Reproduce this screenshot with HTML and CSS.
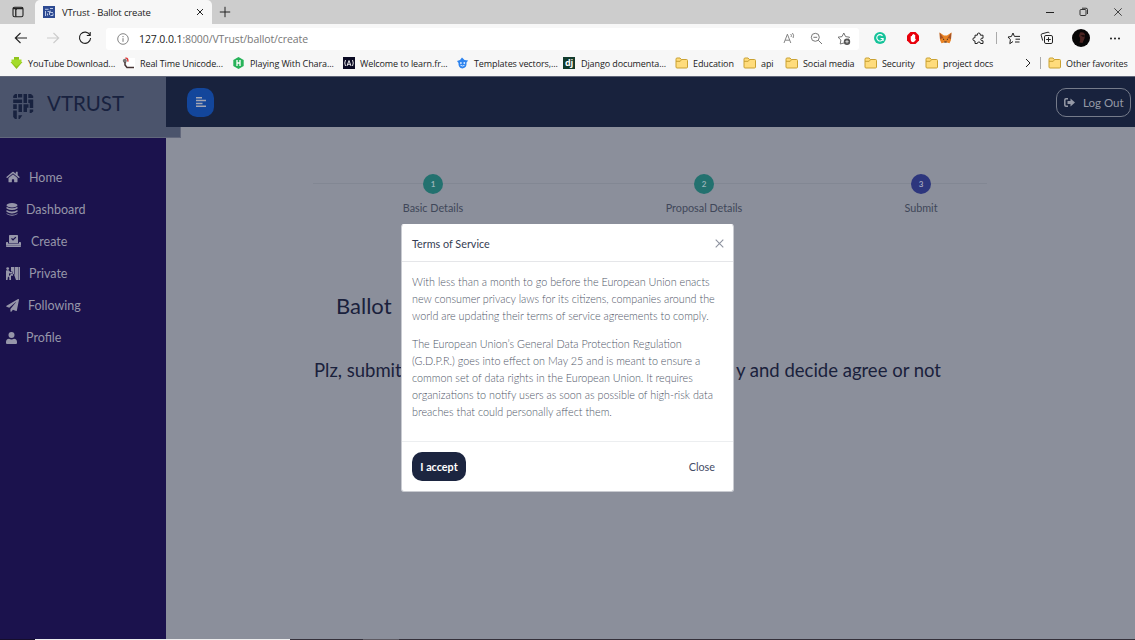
FILE: index.html
```html
<!DOCTYPE html>
<html lang="en">
<head>
<meta charset="utf-8">
<title>VTrust - Ballot create</title>
<link rel="stylesheet" href="styles.css">
</head>
<body>
<svg class="defs" width="0" height="0">
  <symbol id="folder" viewBox="0 0 13 12"><path d="M1 2.2Q1 1 2 1h3l1.3 1.5H11.5q1 0 1 1V10q0 1-1 1H2q-1 0-1-1z" fill="#ffdc7c" stroke="#c9a132"/><path d="M1 4.3h4.2l1.3-1.6" fill="none" stroke="#c9a132"/></symbol>
</svg>
<header class="browser">
  <div class="tabs">
    <div class="tab-menu"><svg width="12" height="12" viewBox="0 0 12 12"><rect x="1" y="1.2" width="10" height="9.6" rx="1.6" fill="none" stroke="#222" stroke-width="1.1"/><path d="M1 2.5h10M4 3v7.5" stroke="#222" stroke-width="1.7"/><path d="M4.5 4v6" stroke="#ccc" stroke-width=".5"/></svg></div>
    <div class="tab">
      <svg width="12" height="12" viewBox="0 0 12 12"><rect width="12" height="12" fill="#2d4a92"/><path d="M2 3.3h3.5M2.5 5v5M4.5 5.5h2V9M7 2.5h3M7.2 4.5v2H10M10 7.5v2H7.5M4.5 7.5v2" stroke="#b9c6e4" fill="none"/></svg>
      <span class="tab-title">VTrust - Ballot create</span>
      <svg class="tab-close" width="8" height="8" viewBox="0 0 8 8"><path d="M1 1l6 6M7 1L1 7" stroke="#222"/></svg>
    </div>
    <svg class="tab-new" width="12" height="12" viewBox="0 0 12 12"><path d="M6 .8v10.4M.8 6h10.4" stroke="#222"/></svg>
    <div class="window-controls">
      <svg width="10" height="10" viewBox="0 0 10 10"><path d="M1 5.5h8" stroke="#222"/></svg>
      <svg width="10" height="10" viewBox="0 0 10 10"><rect x="1" y="2.5" width="6" height="6" rx="1" fill="none" stroke="#222" stroke-width=".9"/><path d="M3 1.2h4q1.5 0 1.5 1.5V7" fill="none" stroke="#222" stroke-width=".9"/></svg>
      <svg width="10" height="10" viewBox="0 0 10 10"><path d="M1.3 1.3l7.4 7.4M8.7 1.3L1.3 8.7" stroke="#333" stroke-width=".9"/></svg>
    </div>
  </div>
  <div class="toolbar">
    <div class="nav">
      <svg width="14" height="12" viewBox="0 0 14 12"><path d="M13 6H1.3M6.5 1L1.3 6l5.2 5" fill="none" stroke="#222" stroke-width="1.1"/></svg>
      <svg width="14" height="12" viewBox="0 0 14 12"><path d="M1 6h11.7M7.5 1l5.2 5-5.2 5" fill="none" stroke="#ccc" stroke-width="1.1"/></svg>
      <svg width="14" height="14" viewBox="0 0 14 14"><path d="M11.9 4A5.6 5.6 0 1 0 12.6 7M12.2 1v3.5H8.8" fill="none" stroke="#222" stroke-width="1.1"/></svg>
    </div>
    <div class="address">
      <svg width="12" height="12" viewBox="0 0 12 12"><circle cx="6" cy="6" r="5.3" fill="none" stroke="#777" stroke-width=".9"/><path d="M6 5.2v3.6M6 3v1.2" stroke="#777"/></svg>
      <span class="url"><b>127.0.0.1</b>:8000/VTrust/ballot/create</span>
      <div class="address-tools">
        <svg width="13" height="13" viewBox="0 0 13 13"><path d="M1 11l3.4-8.8L7.8 11M2.2 8.2h4.4M7.7 2q1.2 1.2.4 3M9.4 1q2 2 .7 5" fill="none" stroke="#777" stroke-width=".9"/></svg>
        <svg width="13" height="13" viewBox="0 0 13 13"><circle cx="5.3" cy="5.3" r="4" fill="none" stroke="#777"/><path d="M3.4 5.3h3.8M8.3 8.3L12 12" stroke="#777"/></svg>
        <svg width="14" height="13" viewBox="0 0 14 13"><path d="M7 11L3.2 12l.7-4L1 5.2l4-.6L6.8 1l1.8 3.6 4 .6-1 1.2" fill="none" stroke="#666" stroke-width=".9"/><circle cx="10" cy="9.7" r="3.2" fill="#555"/><path d="M10 8v3.4M8.3 9.7h3.4" stroke="#fff" stroke-width=".7"/></svg>
      </div>
    </div>
    <div class="extensions">
      <svg width="12" height="12" viewBox="0 0 12 12"><circle cx="6" cy="6" r="6" fill="#15c39a"/><path d="M8.5 3.8A3.2 3.2 0 1 0 9.1 6.5H6.6M9.1 6.5v2.4" fill="none" stroke="#fff" stroke-width="1.1"/></svg>
      <svg width="12" height="12" viewBox="0 0 12 12"><path d="M3.5 0h5L12 3.5v5L8.5 12h-5L0 8.5v-5z" fill="#e8000b"/><path d="M3.7 4.2v3q0 3 2.5 3 1.7 0 3-3.2l-1 .2V3H7.3V2H6.2v.8H5v1.2z" fill="#fff"/></svg>
      <svg width="13" height="12" viewBox="0 0 13 12"><path d="M.6.6L5 3.5h3L12.4.6 12 8l-1.5 3.2-2.7-.8H5.2l-2.7.8L1 8z" fill="#e98324"/><path d="M.6.6L4.5 6 1 7zM12.4.6L8.5 6 12 7z" fill="#a65325"/><path d="M4 7l1.2.7M9 7l-1.2.7M5.3 10h2.4" stroke="#332b2b"/></svg>
      <svg width="13" height="13" viewBox="0 0 13 13"><path d="M3 3.2h2.3Q5 1 6.8 1T8.4 3.2H11v3Q8.8 5.7 8.8 7.4T11 8.8V11.5H8.5Q8.4 9.8 6.8 10T5.3 11.5H3V9Q.9 9 .9 7.2T3 5.7z" fill="none" stroke="#222"/></svg>
      <i class="divider"></i>
      <svg width="14" height="13" viewBox="0 0 14 13"><path d="M6 9.5L2.8 11.7l.6-4L1 5l3.4-.5L6 1l1.4 3.4H13M8.5 7.2H13M8 10h4.5" fill="none" stroke="#222"/></svg>
      <svg width="14" height="14" viewBox="0 0 14 14"><rect x="4.5" y="4.5" width="8" height="8" rx="1.4" fill="none" stroke="#222"/><path d="M8.5 6.2v4.6M6.2 8.5h4.6M2.7 9.6L1.2 4.2q-.3-1.1.8-1.4l6-1.6q1-.2 1.3 1" fill="none" stroke="#222"/></svg>
      <svg width="18" height="18" viewBox="0 0 18 18"><circle cx="9" cy="9" r="9" fill="#080607"/><path d="M8 3.5q4-1 5 2l-.5 4-2 4.5-3-.5Q9 9 7 7z" fill="#4b2422"/><path d="M8.5 6h4l.5 1.5-2 .5z" fill="#1b0d0d"/></svg>
      <svg width="10" height="3" viewBox="0 0 10 3"><circle cx="1" cy="1.5" r=".9"/><circle cx="5" cy="1.5" r=".9"/><circle cx="9" cy="1.5" r=".9"/></svg>
    </div>
  </div>
  <nav class="favorites">
    <a class="fav-download"><svg width="13" height="12" viewBox="0 0 13 12"><path d="M4 0h5v5h3.5L6.5 12 .5 5H4z" fill="#8fc31b"/><path d="M1.5 2.5h10v3L6.5 9.5l-5-4z" fill="#a4dc2b"/></svg>YouTube Download...</a>
    <a class="fav-unicode"><svg width="13" height="12" viewBox="0 0 13 12"><path d="M5 1h8v11H5z" fill="#fff"/><circle cx="2.8" cy="3.8" r="2" fill="#777"/><path d="M3.4 1.2q3-.6 2.4 3.5" fill="none" stroke="#d33" stroke-width="1.4"/><path d="M3 5v3l2 2.4h7" fill="none" stroke="#433" stroke-width="1.5"/></svg>Real Time Unicode...</a>
    <a class="fav-playing"><svg width="13" height="12" viewBox="0 0 13 12"><path d="M6.5 0l5.2 3v6l-5.2 3-5.2-3V3z" fill="#28b35a"/><path d="M5 3v6M8 3v6M5 6h3" stroke="#fff" stroke-width="1.3"/></svg>Playing With Chara...</a>
    <a class="fav-learn"><svg width="13" height="12" viewBox="0 0 13 12"><path d="M1 0h12v12H1z" fill="#0a0a23"/><path d="M3.5 3q-1.5 3 0 6M10.5 3q1.5 3 0 6M5 9l2-5.5L9 9M5.7 7.3h2.6" fill="none" stroke="#fff" stroke-width=".9"/></svg>Welcome to learn.fr...</a>
    <a class="fav-templates"><svg width="13" height="12" viewBox="0 0 13 12"><path d="M1 4l3-1 2-2.5L8.5 3l3.7.6-1.7 2Q11 11 6.5 11.4 2 11 2.5 6z" fill="#2d83ee"/><circle cx="4.9" cy="6" r=".9" fill="#d9eaff"/><circle cx="8.3" cy="6" r=".9" fill="#d9eaff"/><path d="M4.5 8.3q2 1.4 4 0" fill="none" stroke="#d9eaff"/></svg>Templates vectors,...</a>
    <a class="fav-django"><span class="django">dj</span>Django documenta...</a>
    <a class="fav-education"><svg width="13" height="12"><use href="#folder"/></svg>Education</a>
    <a class="fav-api"><svg width="13" height="12"><use href="#folder"/></svg>api</a>
    <a class="fav-social"><svg width="13" height="12"><use href="#folder"/></svg>Social media</a>
    <a class="fav-security"><svg width="13" height="12"><use href="#folder"/></svg>Security</a>
    <a class="fav-docs"><svg width="13" height="12"><use href="#folder"/></svg>project docs</a>
    <svg class="more" width="6" height="10" viewBox="0 0 6 10"><path d="M1 1l4 4-4 4" fill="none" stroke="#222"/></svg>
    <i class="divider"></i>
    <a class="fav-other"><svg width="13" height="12"><use href="#folder"/></svg>Other favorites</a>
  </nav>
</header>

<div class="app">
  <aside class="sidebar">
    <div class="brand">
      <svg width="21" height="25" viewBox="0 0 21 25" fill="#18223f"><path d="M.2 4V2L2 0h2v4zM5 0h4.2v3.5H5zM10.5 0H14v9h-3.5zM15.3 0H18l2.2 2v2h-4.9zM.2 5.5h8.9V9H.2zM15.3 5.5h4.9V14h-3.5V9h-1.4zM.2 10.3h3.6V15H.2zM5.5 10.3H9V18H5.5zM10.5 10.3h5v3.5h-1.5V18h-3.5zM.2 16.4h3.6V25H2L.2 23zM16.7 15.4h3.5v2l-2 1.7h-1.5zM5.5 21.2h3.8L6.7 25H5.5z"/></svg>
      <span>VTRUST</span>
    </div>
    <nav class="menu">
      <a><svg width="14" height="12" viewBox="0 0 576 512"><path d="M280 148L96 300v164q0 16 16 16l112-1q16 0 16-16v-95q0-16 16-16h64q16 0 16 16v95q0 16 16 16h112q16 0 16-16V300L296 148q-8-6-16 0zM572 251l-84-69V44q0-12-12-12h-56q-12 0-12 12v72l-90-74q-30-24-60 0L4 251q-8 8-1 17l25 31q8 8 17 1l235-193q8-6 16 0l235 193q9 7 17-1l25-31q7-9-1-17z"/></svg>Home</a>
      <a class="item-dashboard"><svg width="12" height="13" viewBox="0 0 12 13"><ellipse cx="6" cy="2.2" rx="5.5" ry="2.2"/><path d="M.5 3.8q5.5 3 11 0v1.7q-5.5 3.2-11 0zM.5 7q5.5 3 11 0v1.8q-5.5 3.2-11 0zM.5 10.2q5.5 3 11 0v.8q-5.5 3.6-11 0z"/></svg>Dashboard</a>
      <a class="item-create"><svg width="15" height="12" viewBox="0 0 15 12"><path fill-rule="evenodd" d="M3 .8Q3 0 3.8 0h7.4q.8 0 .8.8V8H3zM5 3.8l2 2 3.3-3.3-.9-.8L7 4l-1-1z"/><path d="M.8 7H2v1.6h11V7h1.2q.8 0 .8.8v2.4H0V7.8Q0 7 .8 7zM0 10.6h15v.6q0 .8-.8.8H.8q-.8 0-.8-.8z"/></svg>Create</a>
      <a class="item-private"><svg width="14" height="13" viewBox="0 0 14 13"><circle cx="1.7" cy="1.6" r="1.4"/><path d="M0 4q0-.7.7-.7h2L4.2 5H6v1.5H3.5L3 6v2l1.6 2v3H3.3v-2.5L2 9.5 1.5 13H0zM5 0h3v7l-3 .8V7h1.5V4.5H5zM8.6 0h3.8v13H10l-1.8-5 .4-1zM12.8 0H14v13h-1.2zM4 7.5h3v1.3H5V13H4z"/></svg>Private</a>
      <a class="item-following"><svg width="13" height="13" viewBox="0 0 512 512"><path d="M476 3L21 266q-28 18 3 38l104 43L387 121q8-5 4 4L174 390v88q2 40 37 22l62-76 123 51q26 8 32-19L512 32Q508-8 476 3z"/></svg>Following</a>
      <a class="item-profile"><svg width="11" height="12" viewBox="0 0 11 12"><circle cx="5.5" cy="3" r="3"/><path d="M3 6.8q2.5 1.2 5 0 3 .2 3 3.2v1q0 1-1 1H1q-1 0-1-1v-1q0-3 3-3.2z"/></svg>Profile</a>
    </nav>
  </aside>
  <main class="content">
    <div class="topbar">
      <button class="toggle"><svg width="10" height="10" viewBox="0 0 10 10"><path d="M0 .8h6M0 3.6h10M0 6.4h6.5M0 9.2h10" stroke="#a4a6b3" stroke-width="1.5"/></svg></button>
      <button class="logout"><svg width="11" height="9" viewBox="0 0 11 9"><path d="M4 .8H2Q.8.8.8 2v5Q.8 8.2 2 8.2h2" fill="none" stroke="#9599a6" stroke-width="1.5"/><path d="M3.5 3h3V.5L11 4.5l-4.5 4V6h-3z" fill="#9599a6"/></svg>Log Out</button>
    </div>
    <div class="stepper">
      <div class="step"><b>1</b><span>Basic Details</span></div>
      <div class="step"><b>2</b><span>Proposal Details</span></div>
      <div class="step current"><b>3</b><span>Submit</span></div>
    </div>
    <h2 class="title">Ballot</h2>
    <h3 class="subtitle"><span>Plz, submit</span><span class="subtitle-end">y and decide agree or not</span></h3>
  </main>
</div>
<footer class="taskbar"><i class="task-start"></i><i class="task-search"></i><i class="task-apps"></i></footer>

<section class="modal">
  <header class="modal-head"><span>Terms of Service</span><svg width="9" height="9" viewBox="0 0 9 9"><path d="M.7.7l7.6 7.6M8.3.7L.7 8.3" stroke="#8d929f" stroke-width="1.1"/></svg></header>
  <div class="modal-body">
    <p>With less than a month to go before the European Union enacts<br>new consumer privacy laws for its citizens, companies around the<br>world are updating their terms of service agreements to comply.</p>
    <p>The European Union’s General Data Protection Regulation<br>(G.D.P.R.) goes into effect on May 25 and is meant to ensure a<br>common set of data rights in the European Union. It requires<br>organizations to notify users as soon as possible of high-risk data<br>breaches that could personally affect them.</p>
  </div>
  <footer class="modal-foot"><button class="accept">I accept</button><button class="close">Close</button></footer>
</section>
</body>
</html>
```
FILE: styles.css
```css
* { box-sizing: border-box; }
body { margin: 0; width: 1135px; height: 640px; overflow: hidden; font-family: Lato, sans-serif; background: #8b8f9b; display: flex; flex-direction: column; }
svg { display: block; flex: none; }
button { font: inherit; border: 0; padding: 0; }
.defs { position: absolute; }

.browser { height: 77px; flex: none; background: #f7f7f7; border-bottom: 1px solid #61677a; font-family: "Open Sans", sans-serif; color: #222; }
.tabs { height: 24px; background: #cdcdcd; display: flex; align-items: center; }
.tab-menu { width: 35px; display: flex; justify-content: center; }
.tab { width: 177px; height: 24px; background: #f7f7f7; border-radius: 5px 5px 0 0; display: flex; align-items: center; padding: 0 8px; }
.tab-title { font-size: 9.5px; margin-left: 7px; letter-spacing: -.15px; }
.tab-close { margin-left: auto; }
.tab-new { margin-left: 7px; }
.window-controls { margin-left: auto; display: flex; gap: 24px; padding-right: 12px; }
.toolbar { height: 28px; display: flex; align-items: center; }
.nav { width: 101px; padding-left: 14px; display: flex; align-items: center; gap: 18px; margin-right: 5px; }
.address { width: 753px; height: 22px; background: #fff; border-radius: 3px; display: flex; align-items: center; padding: 0 8px 0 11px; margin-top: 1px; }
.url { font-size: 10.5px; margin-left: 10px; color: #777; letter-spacing: -.1px; }
.url b { font-weight: 400; color: #222; }
.address-tools { display: flex; gap: 14px; margin-left: auto; }
.extensions { flex: 1; display: grid; grid-template-columns: 32px 33px 32px 34px 2px 33px 33px 35px 33px; justify-items: center; align-items: center; padding-left: 5px; }
.divider { width: 1px; height: 12px; background: #aaa; }
.favorites { height: 24px; display: grid; grid-template-columns: 112px 110px 110px 114px 107px 112px 68px 42px 79px 61px 100px 15px 8px 85px; align-items: center; padding-left: 10px; font-size: 9px; padding-bottom: 2px; letter-spacing: -.1px; }
.favorites a { display: flex; align-items: center; gap: 5px; white-space: nowrap; }
.django { width: 12px; height: 12px; background: #123b2c; color: #fff; font-size: 9px; line-height: 11px; font-weight: 700; text-align: center; margin: 0 1px 0 0; }

.app { flex: 1; display: flex; min-height: 0; }
.sidebar { width: 166px; background: #1b124d; color: #9696a9; }
.brand { width: 181px; height: 61px; background: #4b546c; border: solid #62687c; border-width: 0 1px 1px 0; display: flex; padding: 17px 0 0 13px; gap: 13px; font-size: 20.5px; line-height: 17px; color: #18223f; }
.brand span { line-height: 18px; }
.menu { padding: 23px 0 0 6px; }
.menu a { height: 32.15px; display: flex; align-items: center; gap: 9px; font-size: 12.5px; }
.menu svg { fill: #9696a9; }
.menu .item-dashboard { gap: 8px; }
.menu .item-create { gap: 10px; }
.content { flex: 1; min-width: 0; }
.topbar { position: relative; z-index: 1; height: 50px; background: #18223d; display: flex; justify-content: space-between; align-items: center; padding: 0 4px 0 21px; }
.toggle { width: 27px; height: 29px; border-radius: 10px; background: #13469b; display: grid; place-items: center; }
.logout { width: 75px; height: 29px; border: 1px solid #757b8a; border-radius: 10px; background: none; color: #9599a6; display: flex; align-items: center; gap: 8px; padding-left: 7px; font-size: 11.5px; white-space: nowrap; }
.stepper { margin: 47px 0 0 147px; width: 674px; display: grid; grid-template-columns: 240px 302px 132px; background: linear-gradient(#828793, #828793) 0 9px / 100% 1px no-repeat; }
.step { display: flex; flex-direction: column; align-items: center; font-size: 10.8px; font-weight: 400; color: #404759; }
.step b { width: 20px; height: 20px; border-radius: 50%; background: #23716f; color: #99b3b8; font-size: 8px; line-height: 20px; text-align: center; }
.step span { line-height: 16px; margin-top: 6px; }
.current b { background: #2d367d; color: #a1a4bd; }
.title { margin: 73px 0 0 170px; font-size: 22px; font-weight: 400; line-height: 34px; color: #1a213c; }
.subtitle { margin: 34px 0 0 148px; width: 627px; display: flex; justify-content: space-between; font-size: 18.5px; font-weight: 400; line-height: 26px; color: #1a213c; }
.taskbar { height: 1px; flex: none; display: flex; background: #34303a; }
.task-start { width: 35px; background: #160e2c; }
.task-search { width: 255px; background: #eee; }
.task-apps { width: 36px; margin-left: 73px; background: #5d5a62; }

.modal { position: absolute; left: 401px; top: 224px; width: 333px; height: 268px; background: #fff; border: 1px solid #c9cbd1; border-top-color: #fff; border-radius: 3px; color: #353d53; }
.modal-head { height: 37px; border-bottom: 1px solid #e5e6e9; display: flex; align-items: center; justify-content: space-between; padding: 0 9px 0 10px; font-size: 10.8px; }
.modal-body { height: 180px; padding: 11px 10px 0; border-bottom: 1px solid #eceef0; font-size: 10.8px; font-weight: 300; line-height: 17.1px; color: #4f5668; white-space: nowrap; }
.modal-body p { margin: 0 0 10.5px; }
.modal-foot { display: flex; justify-content: space-between; align-items: center; height: 49px; padding: 0 18px 0 10px; font-size: 10.8px; }
.accept { width: 54px; height: 29px; border-radius: 10px; background: #1c2540; color: #fff; font-weight: 700; }
.close { background: none; color: #434b65; }
```
